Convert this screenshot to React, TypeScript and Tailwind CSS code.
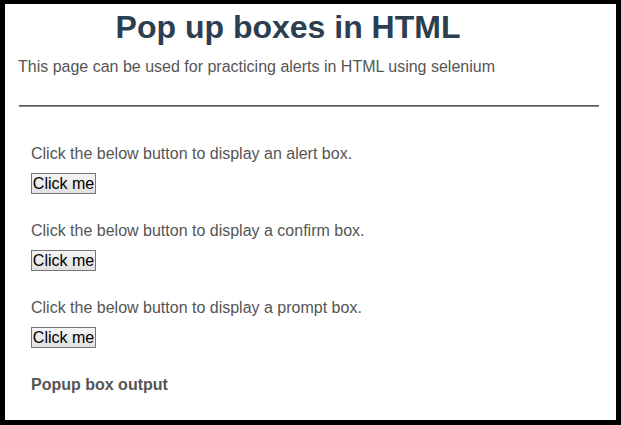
import React from "react";

const blocks = [
  "Click the below button to display an alert box.",
  "Click the below button to display a confirm box.",
  "Click the below button to display a prompt box.",
];

const App: React.FC = () => {
  return (
    <div className="h-[425px] w-[621px] bg-black pt-[4px] pl-[5px] pr-[5px] pb-[5px] font-['Liberation_Sans',Arial,sans-serif]">
      <div className="h-full w-full bg-white">
        <h1 className="pt-[5px] pr-[45px] text-center text-[32px] leading-[36px] font-bold text-[#2c3e50]">
          Pop up boxes in HTML
        </h1>
        <p className="mt-[13px] pl-[13px] text-[16px] leading-[18px] text-[#555]">
          This page can be used for practicing alerts in HTML using selenium
        </p>
        <div className="mt-[29px] ml-[14px] mr-[17px] border-t border-b border-t-[#5a5a5a] border-b-[#8c8c8c]" />

        <div className="mt-[38px] flex flex-col gap-[28px] pl-[26px]">
          {blocks.map((label) => (
            <div key={label} className="flex flex-col items-start gap-[10px]">
              <p className="text-[16px] leading-[18px] text-[#555]">{label}</p>
              <button className="h-[21px] w-[65px] border border-[#767676] bg-gradient-to-b from-[#f4f4f4] to-[#e2e2e2] pt-[1px] text-[16px] leading-[18px] text-black">
                Click me
              </button>
            </div>
          ))}
          <p className="text-[16px] leading-[18px] font-bold text-[#555]">
            Popup box output
          </p>
        </div>
      </div>
    </div>
  );
};

export default App;
